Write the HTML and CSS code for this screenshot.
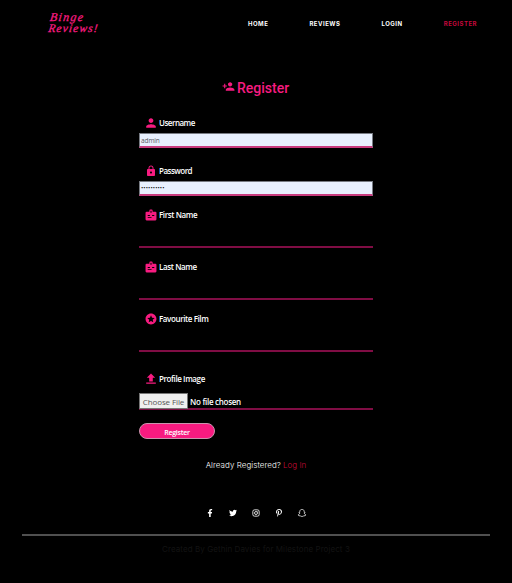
FILE: index.html
```
<!DOCTYPE html>
<html lang="en">
<head>
<meta charset="utf-8">
<title>Binge Reviews - Register</title>
<link rel="stylesheet" href="styles.css">
</head>
<body>
<header class="header">
  <a class="logo"><span>Binge</span><span class="logo-second">Reviews!</span></a>
  <nav class="nav"><a>HOME</a><a class="nav-reviews">REVIEWS</a><a class="nav-login">LOGIN</a><a class="active">REGISTER</a></nav>
</header>
<main>
  <h1 class="title">
    <svg class="title-icon" viewBox="0 0 24 24"><path d="M15 12c2.210 0 4-1.790 4-4s-1.790-4-4-4-4 1.790-4 4 1.790 4 4 4zm-9-2V7H4v3H1v2h3v3h2v-3h3v-2H6zm9 4c-2.670 0-8 1.340-8 4v2h16v-2c0-2.660-5.330-4-8-4z"/></svg>
    <span>Register</span>
  </h1>
  <form class="form">
    <div class="field filled username">
      <label><svg viewBox="2 2 20 20"><path d="M12 12c2.210 0 4-1.790 4-4s-1.790-4-4-4-4 1.790-4 4 1.790 4 4 4zm0 2c-2.670 0-8 1.340-8 4v2h16v-2c0-2.660-5.330-4-8-4z"/></svg><span class="t-user">Username</span></label>
      <div class="input"><span>admin</span></div>
    </div>
    <div class="field filled password">
      <label><svg viewBox="0 0 24 24"><path d="M18 8h-1V6c0-2.760-2.240-5-5-5S7 3.240 7 6v2H6c-1.100 0-2 .9-2 2v10c0 1.100.9 2 2 2h12c1.100 0 2-.9 2-2V10c0-1.100-.9-2-2-2zm-6 9c-1.100 0-2-.9-2-2s.9-2 2-2 2 .9 2 2-.9 2-2 2zm3.100-9H8.900V6c0-1.710 1.390-3.100 3.100-3.100s3.100 1.390 3.100 3.100v2z"/></svg><span class="t-pass">Password</span></label>
      <div class="input dots"><span>••••••••••</span></div>
    </div>
    <div class="field line">
      <label><svg viewBox="1 1 22 22"><path fill-rule="evenodd" d="M20 6h-5V4a2 2 0 0 0-2-2h-2a2 2 0 0 0-2 2v2H4a2 2 0 0 0-2 2v12a2 2 0 0 0 2 2h16a2 2 0 0 0 2-2V8a2 2 0 0 0-2-2zM13 8h-2V4h2zM6 12h4v2H6zm8 0h4v2h-4zm-8 4h7v1.500H6z"/></svg><span class="t-first">First Name</span></label>
    </div>
    <div class="field line">
      <label><svg viewBox="1 1 22 22"><path fill-rule="evenodd" d="M20 6h-5V4a2 2 0 0 0-2-2h-2a2 2 0 0 0-2 2v2H4a2 2 0 0 0-2 2v12a2 2 0 0 0 2 2h16a2 2 0 0 0 2-2V8a2 2 0 0 0-2-2zM13 8h-2V4h2zM6 12h4v2H6zm8 0h4v2h-4zm-8 4h7v1.500H6z"/></svg><span class="t-last">Last Name</span></label>
    </div>
    <div class="field line">
      <label><svg viewBox="1 1 22 22"><path d="M11.990 2C6.470 2 2 6.480 2 12s4.470 10 9.990 10C17.520 22 22 17.520 22 12S17.520 2 11.990 2zm4.240 16L12 15.450 7.770 18l1.120-4.810-3.730-3.230 4.920-.42L12 5l1.920 4.530 4.920.42-3.730 3.230L16.230 18z"/></svg><span class="t-film">Favourite Film</span></label>
    </div>
    <div class="field file">
      <label><svg viewBox="2 2 20 20"><path d="M9 16h6v-6h4l-7-7-7 7h4zm-5 2h16v2H4z"/></svg><span class="t-image">Profile Image</span></label>
      <div class="chooser"><button type="button" class="choose"><span>Choose File</span></button><span class="nofile">No file chosen</span></div>
    </div>
    <button type="button" class="submit">Register</button>
  </form>
  <p class="already"><span class="question">Already Registered?</span> <a>Log In</a></p>
</main>
<footer>
  <div class="social">
    <svg viewBox="0 0 320 512"><path d="M279 288l14-93h-89v-60c0-25 12-50 52-50h41V7s-37-7-72-7c-73 0-121 44-121 125v70H23v93h81v224h100V288z"/></svg>
    <svg viewBox="0 0 512 512"><path d="M459 152c0 5 0 9 0 14 0 138-105 298-298 298-59 0-114-17-161-47 8 1 16 1 25 1 49 0 94-16 130-45-46-1-84-31-98-73 7 1 13 2 20 2 9 0 19-1 28-4-48-10-84-52-84-103v-1c14 8 30 13 47 13C39 189 21 156 21 119c0-20 5-38 14-54 52 64 129 105 216 110-2-8-3-16-3-24 0-58 47-105 105-105 30 0 57 13 77 33 24-5 46-13 66-25-8 24-24 45-46 58 21-2 41-8 60-16-14 21-32 40-51 56z"/></svg>
    <svg viewBox="0 0 24 24"><g fill="none" stroke="#fff" stroke-width="2.500"><rect x="2.500" y="2.500" width="19" height="19" rx="5"/><circle cx="12" cy="12" r="4.500"/></g><circle cx="17.500" cy="6.500" r="1.400"/></svg>
    <svg viewBox="0 0 384 512"><path d="M204 7C101 7 0 75 0 186c0 70 40 110 64 110 10 0 16-28 16-35 0-9-23-29-23-67 0-80 60-136 139-136 68 0 118 39 118 110 0 53-21 152-90 152-25 0-46-18-46-43 0-38 26-74 26-113 0-66-94-54-94 26 0 17 2 35 10 50-14 58-41 144-41 204 0 18 3 36 4 55 3 4 2 3 7 1 50-69 49-82 71-172 12 23 44 36 69 36 106 0 154-103 154-197C384 68 298 7 204 7z"/></svg>
    <svg viewBox="1 1 22 22"><path fill="none" stroke="#fff" stroke-width="1.900" stroke-linejoin="round" d="M12 2c-4 0-6 2.500-6 6v2L4 9.500 3.500 11 6 12.500C5 15 3.500 16 1.500 17l.5 1.500 3 .5.500 1.500 3-.3L12 22l3.500-1.800 3 .3.500-1.500 3-.5.500-1.500c-2-1-3.500-2-4.500-4.500l2.500-1.500L20 9.500l-2 .5V8c0-3.500-2-6-6-6z"/></svg>
  </div>
  <p class="credit">Created By Gethin Davies for Milestone Project 3</p>
</footer>
</body>
</html>
```
FILE: styles.css
```
* { box-sizing: border-box; }
body { margin: 0; height: 583px; overflow: hidden; background: #000; color: #fff; font-family: "Open Sans", "Noto Sans", sans-serif; }
h1, p { margin: 0; font-weight: 400; }
span, a { white-space: nowrap; }
svg { fill: #f71b80; display: block; flex: none; }
button { padding: 0; font: inherit; }

.header { height: 48px; display: flex; justify-content: space-between; padding: 0 35px 0 49px; }
.logo { display: flex; flex-direction: column; width: 52px; padding-top: 12px; color: #f71b80; font: italic 400 12px/11px "Liberation Serif", serif; letter-spacing: 1.300px; transform: skewX(-8deg); -webkit-text-stroke: .3px #f71b80; }
.logo-second { font-size: 11.500px; letter-spacing: 1.100px; }
.nav { display: flex; align-items: center; justify-content: space-between; width: 229px; font: 700 6px/10px Inter, sans-serif; letter-spacing: .5px; }
.active { color: #c4083c; }

.title { display: flex; align-items: center; height: 20px; margin: 30px 0 0 222px; color: #f71b80; font: 500 14px/20px Roboto, sans-serif; }
.title-icon { width: 13px; height: 13px; margin: -3px 2px 0 0; }

.form { width: 234px; margin: 19px auto 0; }
.field label { display: flex; align-items: center; height: 12px; padding-left: 6px; gap: 2px; font-weight: 600; font-size: 8px; line-height: 12px; }
.field label svg { width: 12px; height: 12px; }
.t-user { letter-spacing: -.5px; }
.t-pass { letter-spacing: -.52px; }
.t-first, .t-last, .t-film, .t-image { letter-spacing: -.4px; }
.filled { height: 48px; }
.password { height: 44px; }
.input { height: 15px; margin-top: 4px; padding: 1px; background: #e8f0fe; border: 1px solid #777b83; border-bottom: 2px solid #c93c7f; color: #555961; font-size: 6.500px; line-height: 12px; letter-spacing: -.1px; }
.dots { color: #111; font-size: 6px; line-height: 11px; letter-spacing: .1px; }
.line { height: 39px; margin-bottom: 13px; border-bottom: 2px solid #800d44; }
.file { height: 37px; margin-top: 21px; border-bottom: 2px solid #800d44; }
.chooser { display: flex; align-items: center; height: 16px; margin-top: 8px; gap: 2px; }
.choose { width: 49px; height: 16px; border: 1px solid #777; background: #efefef; color: #555; font-size: 8px; line-height: 13px; letter-spacing: -.1px; }
.nofile { font-size: 8px; font-weight: 600; letter-spacing: -.28px; }
.submit { display: block; width: 76px; height: 16px; margin-top: 13px; padding-top: 3px; border: 1px solid #c994ac; border-radius: 8px; background: #f71b80; color: #fff; font-size: 7px; font-weight: 600; line-height: 11px; letter-spacing: -.25px; }
.already { display: flex; justify-content: center; gap: 2px; height: 12px; margin-top: 20px; font: 300 8px/12px Inter, sans-serif; letter-spacing: .05px; }
.already a { color: #c50a34; }

.social { display: flex; justify-content: space-between; width: 101px; height: 10px; margin: 37px auto 0; transform: translateX(-.5px); }
.social svg { width: 9px; height: 8px; margin-top: 1px; fill: #fff; }
.credit { width: 468px; margin: 16px auto 0; padding-top: 7px; border-top: 2px solid #505050; text-align: center; color: #131313; font: 400 8px/12px Inter, sans-serif; letter-spacing: .07px; }
```
